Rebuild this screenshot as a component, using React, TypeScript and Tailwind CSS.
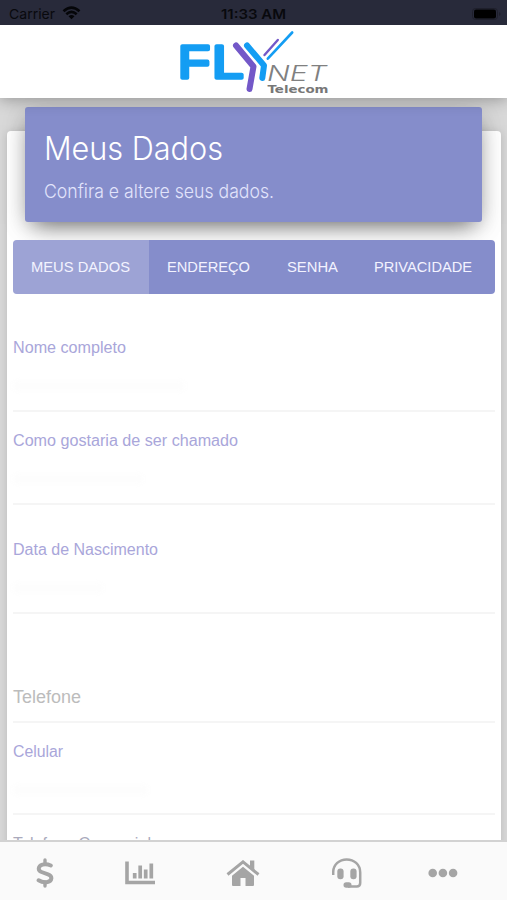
const TABS = [
  { label: "MEUS DADOS", className: "w-[135.5px] bg-white/20", length: 99 },
  { label: "ENDEREÇO", className: "w-[120px]", length: 83 },
  { label: "SENHA", className: "w-[87px]", length: 51 },
  { label: "PRIVACIDADE", className: "w-[135px]", length: 98 },
];

function Logo() {
  return (
    <svg width="150" height="66" viewBox="0 0 150 66" fill="none" className="overflow-visible" aria-label="Flynet Telecom">
      <g
        fill="#149df3"
        stroke="#149df3"
        strokeWidth="3.6"
        strokeLinejoin="round"
        className="font-['Liberation_Sans',sans-serif] font-normal"
      >
        <text transform="translate(-1 49.3) scale(1.12 1)" fontSize="47">
          F
        </text>
        <text transform="translate(33 49.3) scale(1.2 1)" fontSize="47">
          L
        </text>
      </g>
      <g strokeLinecap="round" strokeLinejoin="round">
        <path d="M68 16.500 85 36.500 83.300 49" stroke="#149df3" strokeWidth="6" />
        <path d="M57 16.500 74.500 37.500 70.500 60" stroke="#7358c8" strokeWidth="6" />
        <path d="M85.500 26 98.800 11" stroke="#7358c8" strokeWidth="2.400" />
        <path d="M88.800 29.700 113.200 3.500" stroke="#149df3" strokeWidth="2.600" />
      </g>
      <text
        x="88"
        y="52"
        fontSize="21"
        textLength="60"
        lengthAdjust="spacingAndGlyphs"
        fill="#808080"
        className="font-['Inter'] font-light italic"
      >
        NET
      </text>
      <text
        x="88.500"
        y="63.500"
        fontSize="9.800"
        textLength="61"
        lengthAdjust="spacingAndGlyphs"
        fill="#777"
        className="font-['DejaVu_Sans'] font-bold"
      >
        Telecom
      </text>
    </svg>
  );
}

type LineTextProps = {
  children: string;
  width: number;
  size: number;
  height: number;
  className?: string;
};

// Single line of text fitted to a fixed advance width
function LineText({ children, width, size, height, className }: LineTextProps) {
  return (
    <svg width={width} height={height} className={`block shrink-0 overflow-visible ${className ?? ""}`}>
      <text
        x="0"
        y={height / 2 + size * 0.36}
        fontSize={size}
        textLength={width}
        lengthAdjust="spacingAndGlyphs"
        fill="currentColor"
      >
        {children}
      </text>
    </svg>
  );
}

type FieldProps = {
  label: string;
  labelWidth: number;
  className: string;
  valueClassName: string;
};

function Field({ label, labelWidth, className, valueClassName }: FieldProps) {
  return (
    <div className={`border-b-2 border-[#f5f5f5] ${className}`}>
      <LineText width={labelWidth} size={16} height={20} className="text-[#a9a6da]">
        {label}
      </LineText>
      <div className={`mt-6 h-2.5 rounded bg-[#fdfdfd] blur-[2px] ${valueClassName}`} />
    </div>
  );
}

function BottomNav() {
  return (
    <nav className="flex h-[60px] shrink-0 items-center border-t-2 border-[#d2d2d2] bg-[#fafafa] pt-1 pr-4 text-[#a5a5a5]">
      <button type="button" aria-label="Financeiro" className="flex w-[90px] justify-center">
        <svg width="18" height="30" fill="none" stroke="currentColor" strokeLinecap="round">
          <path d="M9 2V6M9 24V28" strokeWidth="3.400" />
          <path
            d="M14.800 7.500C11.500 6 8.500 6 6.500 6.600C2 8 1.500 12.500 5.500 14L12 16.300C17 18.200 16 23 11.500 24C8.500 24.600 5 23.800 2.600 22.300"
            strokeWidth="4"
          />
        </svg>
      </button>
      <button type="button" aria-label="Consumo" className="flex w-[100px] justify-center">
        <svg width="30" height="24" fill="none" stroke="currentColor">
          <path d="M2 0.500V21.500H30" strokeWidth="3.600" />
          <path d="M9.700 17.500V12M15.200 17.500V4.500M20.700 17.500V8.500M26.300 17.500V2.500" strokeWidth="3.700" />
        </svg>
      </button>
      <button type="button" aria-label="Início" className="flex w-[106px] justify-center">
        <svg width="34" height="27" fill="currentColor">
          <path d="M6 15.800 17 6.800 28 15.800V25q0 1-1 1H19.500V18H14.500V26H7Q6 26 6 25Z" />
          <path d="M1.500 14.500 17 1.900 32.500 14.500" fill="none" stroke="currentColor" strokeWidth="3" />
          <path d="M24 0.500H28.300V12L24 8.500Z" />
        </svg>
      </button>
      <button type="button" aria-label="Suporte" className="flex w-[101px] justify-center">
        <svg width="30" height="30" fill="currentColor">
          <path
            d="M1.200 17V14.500C1.200 6.500 7.500 1.400 14.700 1.400S28.200 6.500 28.200 14.500V25Q28.200 28.500 24.700 28.500H16"
            fill="none"
            stroke="currentColor"
            strokeWidth="2.500"
          />
          <rect x="5.300" y="10.500" width="6.300" height="10.800" rx="3" />
          <rect x="18.300" y="10.500" width="6.300" height="10.800" rx="3" />
          <rect x="11.500" y="24.200" width="8" height="5.500" rx="2.700" />
        </svg>
      </button>
      <button type="button" aria-label="Mais" className="flex w-[91px] justify-center">
        <svg width="30" height="10" fill="currentColor">
          <circle cx="4.700" cy="5" r="4.300" />
          <circle cx="14.900" cy="5" r="4.300" />
          <circle cx="25.100" cy="5" r="4.300" />
        </svg>
      </button>
    </nav>
  );
}

export default function App() {
  return (
    <div className="flex h-[900px] w-[507px] flex-col overflow-hidden bg-[#d8d8d8] font-['Liberation_Sans',sans-serif]">
      <div className="z-20 flex h-[25px] shrink-0 items-center bg-[#282a3a] pt-[3px] pr-1.5 pl-[9px] text-[#08090d]">
        <div className="flex flex-1 items-center gap-[7px]">
          <LineText width={46} size={13.5} height={18} className="font-['Inter']">
            Carrier
          </LineText>
          <svg width="19" height="14" fill="none" stroke="#050609" strokeWidth="2.600" className="mb-0.5">
            <path d="M1.500 5.200Q9.500-2 17.500 5.200" />
            <path d="M4.300 8.200Q9.500 3.600 14.700 8.200" />
            <path d="M6.500 10.300Q9.500 7.600 12.500 10.300L9.500 13.300Z" fill="#050609" stroke="none" />
          </svg>
        </div>
        <LineText width={65} size={13.5} height={18} className="-ml-[3px] font-['Inter'] font-semibold">
          11:33 AM
        </LineText>
        <div className="flex flex-1 justify-end pb-px">
          <svg width="29" height="12">
            <rect x="0.500" y="0.500" width="25" height="11" rx="3" fill="none" stroke="#1e1f2b" />
            <rect x="2" y="1.500" width="22" height="9" rx="2" fill="#000" />
            <path d="M27 4v4q1.500-1 1.500-2T27 4" fill="#1e1f2b" />
          </svg>
        </div>
      </div>

      <header className="z-10 flex h-[73px] shrink-0 justify-center bg-white pt-1 shadow-[0_2px_14px_rgba(0,0,0,0.3)]">
        <Logo />
      </header>

      <main className="min-h-0 flex-1 overflow-hidden px-[7px] pt-[33px]">
        <section className="h-[900px] w-[494px] rounded-[4px] bg-white px-1.5 shadow-[0_1px_8px_rgba(0,0,0,0.14)]">
          <div className="relative -top-6 mx-3 h-[114.500px] w-[457px] rounded-[3px] bg-[#858dcb] px-[19px] pt-[23px] text-white shadow-[0_10px_22px_-8px_rgba(0,0,0,0.58),0_4px_26px_rgba(0,0,0,0.13)]">
            <LineText width={179} size={32} height={37} className="font-['Inter'] font-light">
              Meus Dados
            </LineText>
            <LineText width={230} size={19} height={24} className="mt-3 font-['Inter'] font-light text-[#e2e4fb]">
              Confira e altere seus dados.
            </LineText>
          </div>

          <div className="relative z-10 -mt-[5.500px] flex h-[53.500px] w-[481.500px] overflow-hidden rounded-[4px] bg-[#858dcb] text-[#f3f3ff]">
            {TABS.map((tab) => (
              <button
                key={tab.label}
                type="button"
                className={`flex shrink-0 items-center justify-center ${tab.className}`}
              >
                <LineText width={tab.length} size={15} height={20}>
                  {tab.label}
                </LineText>
              </button>
            ))}
          </div>

          <form className="w-[481.500px]">
            <Field label="Nome completo" labelWidth={113} className="mt-[43.500px] h-[75px]" valueClassName="w-[172px]" />
            <Field
              label="Como gostaria de ser chamado"
              labelWidth={225}
              className="mt-[17.500px] h-[75px]"
              valueClassName="w-[130px]"
            />
            <Field label="Data de Nascimento" labelWidth={145} className="mt-[34.500px] h-[75px]" valueClassName="w-[90px]" />
            <div className="mt-[73px] h-9 border-b-2 border-[#f5f5f5]">
              <LineText width={68} size={18} height={20} className="text-[#bcbcbc]">
                Telefone
              </LineText>
            </div>
            <Field label="Celular" labelWidth={50} className="mt-[17.500px] h-[74.500px]" valueClassName="w-[135px]" />
            <LineText width={138} size={16} height={20} className="mt-[18px] text-[#aaaabc]">
              Telefone Comercial
            </LineText>
          </form>
        </section>
      </main>

      <BottomNav />
    </div>
  );
}
